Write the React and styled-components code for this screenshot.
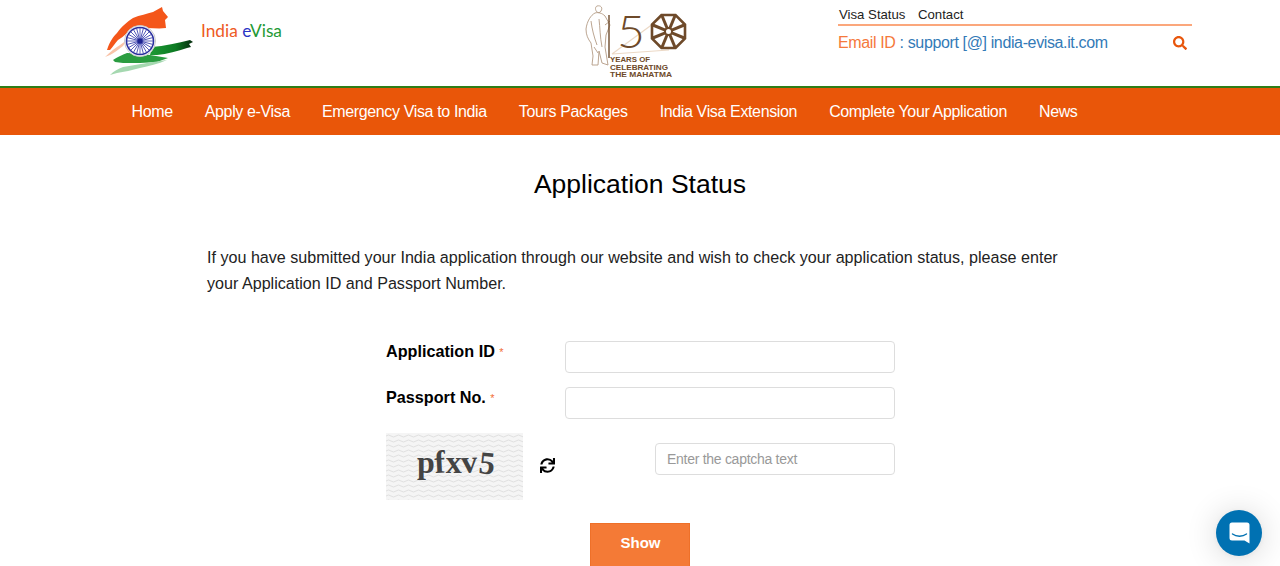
import React from 'react';
import styled, { createGlobalStyle } from 'styled-components';
import { FaSearch, FaSync } from 'react-icons/fa';

const GlobalStyle = createGlobalStyle`
  html, body {
    margin: 0;
    height: 100%;
    overflow: hidden;
    background: #fff;
    font-family: "Liberation Sans", Arial, sans-serif;
    color: #000;
  }
  * { box-sizing: border-box; }
`;

const NAV_ITEMS = [
  'Home',
  'Apply e-Visa',
  'Emergency Visa to India',
  'Tours Packages',
  'India Visa Extension',
  'Complete Your Application',
  'News',
];

// Logos
const FlagLogo = () => (
  <svg width="100" height="76" viewBox="0 0 100 76">
    <defs>
      <linearGradient id="greenBrush" x1="0" x2="1" y1="0" y2="0">
        <stop offset="0" stopColor="#1d9a35" />
        <stop offset="0.6" stopColor="#0c7a22" />
        <stop offset="1" stopColor="#052a0d" />
      </linearGradient>
    </defs>
    <path
      d="M3 45 C6 36 9 32 13 28 C18 21 23 17 29 13 C36 10 43 9 49 7 L58 2 L59 6 L64 12 L61 15 L62 23 C55 24 49 23 43 23 C37 23 32 22 29 23 C26 24 25 26 23 28 C20 31 17 33 14 35 C11 38 9 42 6 45 Z"
      fill="#f4561a"
    />
    <path d="M1 52 C6 47 11 43 16 40 L23 35 L19 41 C14 45 10 48 6 50 Z" fill="#f9c3a8" />
    <path
      d="M48 42 C60 41 74 38 86 35 L89 37 L85 39 L87 42 L83 43 C74 46 63 49 53 50 L46 50 Z"
      fill="url(#greenBrush)"
    />
    <path
      d="M9 55 C13 52 18 50 23 48 C30 48 38 49 46 50 L64 53 L53 57 C42 58 30 58 19 58 L11 57 Z"
      fill="#2a9c40"
    />
    <path d="M6 70 C10 66 14 64 19 62 C29 60 39 59 49 57 L63 55 C54 59 45 61 36 63 C28 65 20 67 13 68 Z" fill="#a5d8b0" />
    <circle cx="36" cy="36" r="15.5" fill="#fff" stroke="#c9c9c9" strokeWidth="1" />
    <circle cx="36" cy="36" r="13.5" fill="none" stroke="#2a2f9e" strokeWidth="1.6" />
    <g stroke="#3a40ad" strokeWidth="0.8">
      {Array.from({ length: 24 }, (_, i) => (
        <line key={i} x1="36" y1="36" x2="36" y2="23" transform={`rotate(${i * 15} 36 36)`} />
      ))}
    </g>
    <circle cx="36" cy="36" r="2.6" fill="#1d2391" />
  </svg>
);

const MahatmaLogo = () => (
  <svg width="110" height="80" viewBox="0 0 110 80">
    {/* Walking figure */}
    <g fill="none" stroke="#b39b84" strokeWidth="0.9" transform="translate(0 -3)">
      <path d="M12 5 C16 4 18 7 16 10 C15 12 13 12 12 11 C10 9 10 6 12 5 Z" />
      <path d="M10 12 C6 14 2 20 1 28 C1 34 3 38 6 42 L8 55 L7 64 L13 64 L14 50 L17 62 L23 64 L20 46 L21 34 L25 24 L20 15 C17 12 13 11 10 12 Z" />
      <path d="M6 20 C7 28 9 36 12 44 M14 18 C15 26 15 36 17 46 M20 24 L25 20 M9 46 L13 52" />
    </g>
    <path d="M24 11 L24 54" stroke="#6e4a2a" strokeWidth="1.4" fill="none" />
    <path d="M27 50 L76 14 M27 50 L84 46" stroke="#ecd9c6" strokeWidth="1.2" fill="none" />
    <text
      x="32"
      y="44"
      fontFamily="Lato, sans-serif"
      fontWeight="300"
      fontSize="46"
      fill="#6e4a2a"
      textLength="28"
      lengthAdjust="spacingAndGlyphs"
    >
      5
    </text>
    {/* Chakra wheel */}
    <g transform="translate(83.5 27.5)" stroke="#6e4a2a" fill="none">
      <polygon points="-7,-16.5 7,-16.5 16.5,-7 16.5,7 7,16.5 -7,16.5 -16.5,7 -16.5,-7" strokeWidth="2.6" />
      <circle r="3.5" strokeWidth="2" />
      {Array.from({ length: 8 }, (_, i) => (
        <line key={i} y1="-3.5" y2="-17" strokeWidth="3" transform={`rotate(${i * 45 + 22.5})`} />
      ))}
    </g>
    <g fontFamily="'Liberation Sans', sans-serif" fontWeight="700" fontSize="8" fill="#6e4a2a">
      <text x="25" y="58" textLength="40" lengthAdjust="spacingAndGlyphs">YEARS OF</text>
      <text x="25" y="65.5" textLength="58" lengthAdjust="spacingAndGlyphs">CELEBRATING</text>
      <text x="25" y="73" textLength="62" lengthAdjust="spacingAndGlyphs">THE MAHATMA</text>
    </g>
  </svg>
);

const CaptchaImage = () => (
  <svg width="137" height="67" viewBox="0 0 137 67">
    <defs>
      <pattern id="captchaWave" width="10" height="5" patternUnits="userSpaceOnUse">
        <rect width="10" height="5" fill="#f5f5f5" />
        <path d="M0 3 Q2.5 1 5 3 T10 3" fill="none" stroke="#e0e0e0" strokeWidth="1" />
      </pattern>
    </defs>
    <rect width="137" height="67" fill="url(#captchaWave)" />
    <text
      x="31"
      y="40"
      fontFamily="'Liberation Serif', serif"
      fontWeight="700"
      fontSize="32"
      fill="#444"
      textLength="77"
      rotate="0 -3 0 -3 6"
    >
      pfxv5
    </text>
  </svg>
);

const ChatGlyph = () => (
  <svg width="21" height="22" viewBox="0 0 21 22">
    <path
      d="M3 0.5 H18 A2.5 2.5 0 0 1 20.5 3 V21.5 L15.5 18.5 H3 A2.5 2.5 0 0 1 0.5 16 V3 A2.5 2.5 0 0 1 3 0.5 Z"
      fill="#fff"
    />
    <path d="M3.5 12 C7.5 15 13.5 15 17.5 12" fill="none" stroke="#0071b2" strokeWidth="1.4" strokeLinecap="round" />
  </svg>
);

const App = () => (
  <Page>
    <GlobalStyle />
    <Header>
      <Brand>
        <FlagLogo />
        <BrandName>
          <India>India</India> <Letter>e</Letter>
          <Visa>Visa</Visa>
        </BrandName>
      </Brand>
      <CenterLogo>
        <MahatmaLogo />
      </CenterLogo>
      <TopRight>
        <TopLinks>
          <TopLink>Visa Status</TopLink>
          <TopLink>Contact</TopLink>
        </TopLinks>
        <ContactRow>
          <span>
            <EmailLabel>Email ID</EmailLabel> : <EmailValue>support [@] india-evisa.it.com</EmailValue>
          </span>
          <SearchIcon />
        </ContactRow>
      </TopRight>
    </Header>

    <Nav>
      {NAV_ITEMS.map((item) => (
        <NavItem key={item}>{item}</NavItem>
      ))}
    </Nav>

    <Main>
      <Title>Application Status</Title>
      <Intro>
        If you have submitted your India application through our website and wish to check your application
        status, please enter your Application ID and Passport Number.
      </Intro>
      <Form>
        <FieldRow>
          <Label>
            Application ID <Star>*</Star>
          </Label>
          <TextInput />
        </FieldRow>
        <FieldRow>
          <Label>
            Passport No. <Star>*</Star>
          </Label>
          <TextInput />
        </FieldRow>
        <CaptchaRow>
          <CaptchaImage />
          <RefreshIcon />
          <CaptchaInput placeholder="Enter the captcha text" />
        </CaptchaRow>
        <ShowButton>Show</ShowButton>
      </Form>
    </Main>

    <ChatBubble>
      <ChatGlyph />
    </ChatBubble>
  </Page>
);

// Component Styles
const Page = styled.div`
  width: 1280px;
`;

const Header = styled.header`
  display: grid;
  grid-template-columns: 480px 253px 354px;
  height: 88px;
  padding-left: 105px;
  border-bottom: 2px solid #2f7d16;
`;

const Brand = styled.div`
  display: flex;
  align-items: flex-start;
  padding-top: 5px;
  margin-left: -1px;
`;

const BrandName = styled.div`
  margin: 16px 0 0 -3px;
  font-family: Lato, sans-serif;
  font-size: 17.3px;
  line-height: 20px;
`;

const India = styled.span`
  color: #ee5a24;
`;

const Letter = styled.span`
  color: #2a35c4;
`;

const Visa = styled.span`
  color: #1f9a36;
`;

const CenterLogo = styled.div`
  padding-top: 4px;
`;

const TopRight = styled.div`
  padding-top: 6px;
`;

const TopLinks = styled.div`
  display: flex;
  gap: 12.5px;
  height: 20px;
  padding-left: 1px;
  border-bottom: 2px solid #fba77c;
`;

const TopLink = styled.a`
  font-size: 13.2px;
  line-height: 17px;
  color: #222;
`;

const ContactRow = styled.div`
  display: flex;
  align-items: center;
  justify-content: space-between;
  margin-top: 6px;
  padding-right: 5px;
  font-size: 16px;
  letter-spacing: -0.37px;
  line-height: 22px;
  color: #337ab7;
`;

const EmailLabel = styled.span`
  color: #f5793b;
`;

const EmailValue = styled.span`
  color: #337ab7;
`;

const SearchIcon = styled(FaSearch)`
  width: 14px;
  height: 14px;
  color: #e8560c;
`;

const Nav = styled.nav`
  display: flex;
  align-items: center;
  gap: 32px;
  height: 47px;
  padding-left: 131.5px;
  background: #e95609;
`;

const NavItem = styled.a`
  font-size: 16px;
  letter-spacing: -0.36px;
  color: #fff;
`;

const Main = styled.main`
  display: flex;
  flex-direction: column;
  align-items: center;
`;

const Title = styled.h1`
  margin: 34px 0 0;
  font-size: 26.5px;
  line-height: 30px;
  font-weight: 400;
  color: #000;
`;

const Intro = styled.p`
  width: 866px;
  margin: 45px 0 0;
  font-size: 16.12px;
  line-height: 26px;
  color: #222;
`;

const Form = styled.form`
  display: flex;
  flex-direction: column;
  align-self: flex-start;
  width: 509px;
  margin: 45px 0 0 386px;
`;

const FieldRow = styled.div`
  display: flex;
  height: 32px;
  margin-bottom: 14px;
`;

const Label = styled.label`
  width: 179px;
  font-size: 16.2px;
  line-height: 20px;
  font-weight: 700;
  color: #000;
`;

const Star = styled.span`
  font-size: 11px;
  font-weight: 400;
  color: #f26d36;
  vertical-align: 1px;
`;

const TextInput = styled.input`
  width: 330px;
  height: 32px;
  padding: 0 11px;
  background: #fff;
  border: 1px solid #ddd;
  border-radius: 4px;
  font: 14px "Liberation Sans", sans-serif;
  letter-spacing: -0.28px;
`;

const CaptchaRow = styled.div`
  display: flex;
  align-items: flex-start;
`;

const RefreshIcon = styled(FaSync)`
  width: 15px;
  height: 15px;
  margin: 25px 0 0 17px;
  color: #000;
`;

const CaptchaInput = styled(TextInput)`
  width: 240px;
  margin: 10px 0 0 100px;
  &::placeholder {
    color: #999;
    opacity: 1;
  }
`;

const ShowButton = styled.button`
  align-self: flex-start;
  width: 100px;
  height: 45px;
  margin: 23px 0 0 204px;
  padding: 0 0 6px 1px;
  background: #f47a36;
  border: 1px solid #ee7029;
  font: 700 15px "Liberation Sans", sans-serif;
  color: #fff;
`;

const ChatBubble = styled.div`
  position: fixed;
  right: 18px;
  bottom: 10px;
  display: flex;
  align-items: center;
  justify-content: center;
  width: 46px;
  height: 46px;
  border-radius: 50%;
  background: #0071b2;
  box-shadow: 0 1px 6px rgba(0, 0, 0, 0.06), 0 2px 32px rgba(0, 0, 0, 0.16);
`;

export default App;
